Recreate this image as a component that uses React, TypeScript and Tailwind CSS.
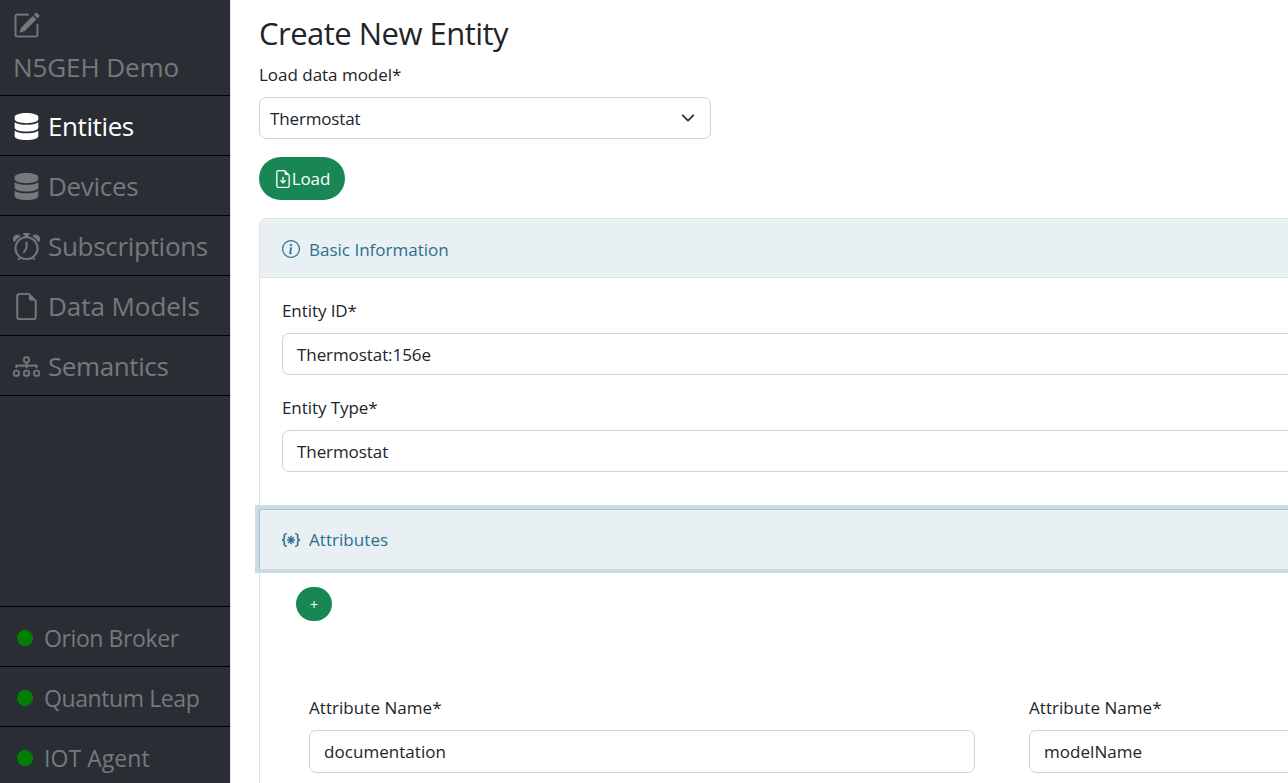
import type { ReactNode } from 'react';
import {
  BsPencilSquare,
  BsAlarm,
  BsFileEarmark,
  BsDiagram3,
  BsFileEarmarkArrowDown,
  BsInfoCircle,
  BsBracesAsterisk,
} from 'react-icons/bs';
import { FaDatabase } from 'react-icons/fa';

function NavItem({ icon, label, active, tracking = 'tracking-[-0.3px]' }: { icon: ReactNode; label: string; active?: boolean; tracking?: string }) {
  return (
    <a className={`flex h-[60px] shrink-0 items-center gap-2 border-b border-black pl-[13px] pt-0.5 text-[26px] ${active ? 'text-white' : 'text-[#75797d]'}`}>
      <span className="text-[27px]">{icon}</span>
      <span className={tracking}>{label}</span>
    </a>
  );
}

function Status({ label, tracking = 'tracking-[-0.4px]' }: { label: string; tracking?: string }) {
  return (
    <div className="flex h-[60px] shrink-0 items-center border-t border-black pl-[17px] text-[23px] text-[#75797d]">
      <span className="mt-[3px] size-4 rounded-full bg-[#008000]" />
      <span className={`ml-[11px] mt-[4px] ${tracking}`}>{label}</span>
    </div>
  );
}

function Field({ label, value, className = '', inputHeight = 'h-[42px]' }: { label: string; value: string; className?: string; inputHeight?: string }) {
  return (
    <div className={className}>
      <div className="h-9 leading-[27px]">{label}</div>
      <div className={`flex items-center rounded-[7px] border border-[#ced4da] bg-white px-[14px] pt-px ${inputHeight}`}>{value}</div>
    </div>
  );
}

export default function App() {
  return (
    <div className="flex h-[783px] w-[1288px] overflow-hidden bg-white font-['Open_Sans',sans-serif] text-[17px] tracking-[-0.08px] text-[#212529]">
      <aside className="flex w-[231px] shrink-0 flex-col border-r border-[#dee2e6] bg-[#2a2e34]">
        <div className="flex h-24 shrink-0 flex-col border-b border-black pl-[13px] pt-3 text-[#75797d]">
          <BsPencilSquare className="size-[27px] shrink-0" strokeWidth={0.15} />
          <span className="mt-[10px] text-[26px] leading-9">N5GEH Demo</span>
        </div>
        <NavItem icon={<FaDatabase />} label="Entities" active tracking="tracking-[-0.4px]" />
        <NavItem icon={<FaDatabase />} label="Devices" />
        <NavItem icon={<BsAlarm strokeWidth={0.2} />} label="Subscriptions" />
        <NavItem icon={<BsFileEarmark strokeWidth={0.2} />} label="Data Models" tracking="tracking-[-0.05px]" />
        <NavItem icon={<BsDiagram3 strokeWidth={0.2} />} label="Semantics" tracking="tracking-[-0.4px]" />
        <div className="mt-[210px]">
          <Status label="Orion Broker" />
          <Status label="Quantum Leap" />
          <Status label="IOT Agent" tracking="tracking-[0.05px]" />
        </div>
      </aside>
      <main className="w-[1057px] shrink-0 pl-[28px] pt-[13px]">
        <h1 className="h-12 text-[31px] leading-10 tracking-[-0.52px]">Create New Entity</h1>
        <div className="h-9 leading-[27px] tracking-[-0.02px]">Load data model*</div>
        <div className="flex h-[42px] w-[452px] items-center justify-between rounded-[7px] border border-[#ced4da] pl-[10px] pr-[15px]">
          <span className="pt-px tracking-[-0.15px]">Thermostat</span>
          <svg className="size-[14px]" viewBox="0 0 16 16" fill="none" stroke="#343a40" strokeWidth="2.3" strokeLinecap="round" strokeLinejoin="round">
            <path d="m2 5 6 6 6-6" />
          </svg>
        </div>
        <button className="mt-[18px] flex h-[43px] w-[86px] items-center justify-center rounded-full bg-[#198754] text-white">
          <BsFileEarmarkArrowDown className="size-[18px]" strokeWidth={0.2} />
          <span className="pt-px">Load</span>
        </button>
        <div className="mt-[18px] w-[1500px] rounded-t-[7px] border border-[#dee2e6]">
          <div className="flex h-[59px] items-center rounded-t-[6px] border-b border-[#dee2e6] bg-[#e8f0f4] pl-[22px] pt-[2px] text-[#2b6f8e]">
            <BsInfoCircle className="size-[18px]" strokeWidth={0.1} />
            <span className="ml-[9px] pt-px tracking-[0px]">Basic Information</span>
          </div>
          <div className="h-[231px] pl-[22px] pt-[19px]">
            <Field label="Entity ID*" value="Thermostat:156e" />
            <Field label="Entity Type*" value="Thermostat" className="mt-[19px]" />
          </div>
          <div className="-ml-px flex h-[60px] items-center border-l border-t border-[#adc2d0] bg-[#e8f0f4] pl-[22px] text-[#2b6f8e] shadow-[0_0_0_4px_#c8dde4]">
            <BsBracesAsterisk className="size-[18px]" strokeWidth={0.3} stroke="currentColor" />
            <span className="ml-[9px] tracking-[0.05px]">Attributes</span>
          </div>
          <div className="h-[230px] pt-[18px]">
            <button className="ml-9 flex h-[34px] w-9 items-center justify-center rounded-full bg-[#198754] text-[14px] text-white">+</button>
            <div className="flex gap-[54px] pl-[49px] pt-[73px] tracking-[0.05px]">
              <Field label="Attribute Name*" value="documentation" className="w-[666px] shrink-0" inputHeight="h-[43px]" />
              <Field label="Attribute Name*" value="modelName" className="w-[666px] shrink-0" inputHeight="h-[43px]" />
            </div>
          </div>
        </div>
      </main>
    </div>
  );
}
